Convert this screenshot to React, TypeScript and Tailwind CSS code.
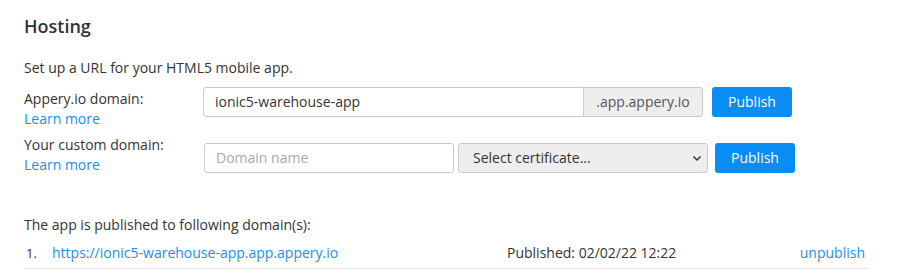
import React from "react";

export default function App() {
  return (
    <div className="w-[908px] h-[271px] bg-white text-[#333] text-[14px] leading-[20px] overflow-hidden" style={{ fontFamily: "'Open Sans', sans-serif" }}>
      <div className="pl-[24px] pr-[40px] pt-[16px]">
        <h2 className="text-[18px] leading-[20px] font-semibold text-[#333]">Hosting</h2>
        <p className="mt-[22px]">Set up a URL for your HTML5 mobile app.</p>

        <div className="flex mt-[9px]">
          <div className="w-[179px] pt-[2px]">
            <div>Appery.io domain:</div>
            <a className="text-[#1a8ff0] block">Learn more</a>
          </div>
          <div className="flex items-start">
            <div className="flex">
              <div className="w-[381px] h-[30px] border border-[#ccc] rounded-l-[3px] px-[11px] flex items-center">ionic5-warehouse-app</div>
              <div className="w-[119px] h-[30px] border border-l-0 border-[#ccc] bg-[#eee] rounded-r-[3px] flex items-center justify-center text-[#555]">.app.appery.io</div>
            </div>
            <button className="ml-[9px] w-[80px] h-[30px] rounded-[3px] bg-[#0a8cf5] text-white">Publish</button>
          </div>
        </div>

        <div className="flex mt-[6px]">
          <div className="w-[180px]">
            <div>Your custom domain:</div>
            <a className="text-[#1a8ff0] block">Learn more</a>
          </div>
          <div className="flex items-start pt-[8px]">
            <div className="w-[250px] h-[30px] border border-[#ccc] rounded-[3px] px-[11px] flex items-center text-[#aaa]">Domain name</div>
            <div className="ml-[4px] w-[250px] h-[30px] border border-[#ccc] bg-[#eee] rounded-[3px] pl-[14px] pr-[4px] flex items-center justify-between text-[#333]">
              <span>Select certificate...</span>
              <svg width="10" height="10" viewBox="0 0 10 10" className="mr-[1px]">
                <path d="M1.5 3.5 L5 7 L8.5 3.5" fill="none" stroke="#333" strokeWidth="1.5" />
              </svg>
            </div>
            <button className="ml-[7px] w-[80px] h-[30px] rounded-[3px] bg-[#0a8cf5] text-white">Publish</button>
          </div>
        </div>

        <p className="mt-[40px]">The app is published to following domain(s):</p>

        <div className="mt-[3px] w-[844px] flex items-center pt-[5px] pb-[5px] border-b border-[#e5e5e5]">
          <span className="w-[28px] pl-[2px] text-[13px]">1.</span>
          <a className="text-[#1a8ff0] w-[455px]">https://ionic5-warehouse-app.app.appery.io</a>
          <span className="flex-1">Published: 02/02/22 12:22</span>
          <a className="text-[#1a8ff0] pr-[3px]">unpublish</a>
        </div>
      </div>
    </div>
  );
}
